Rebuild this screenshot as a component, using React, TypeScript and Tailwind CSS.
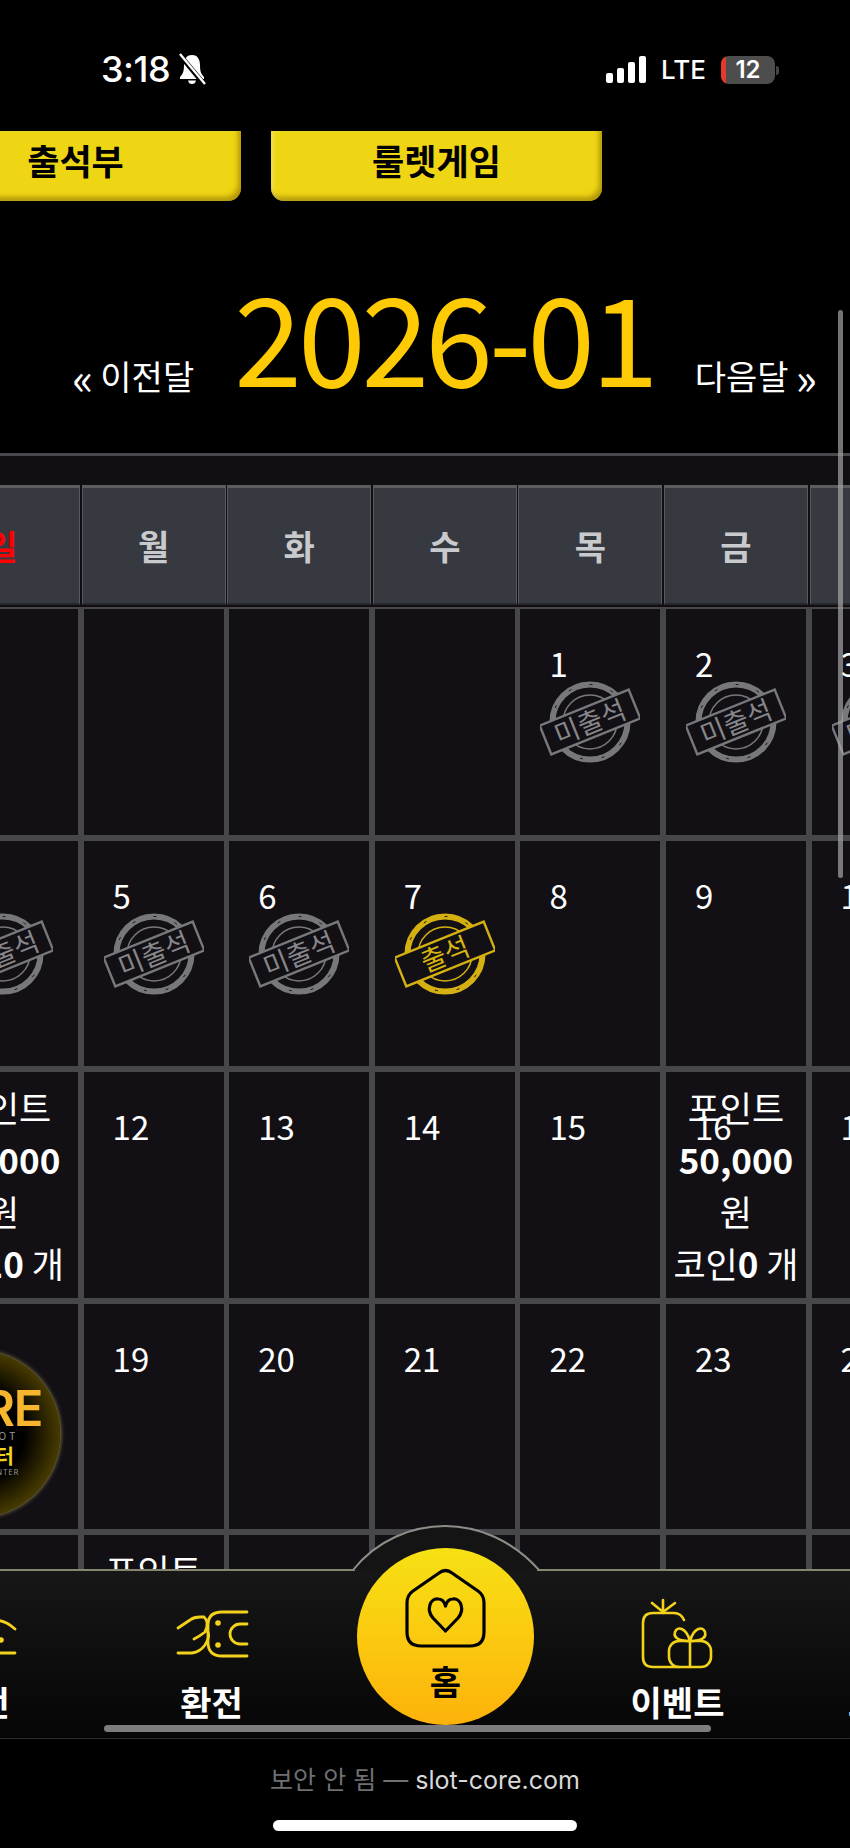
const Stamp = ({ on }: { on?: boolean }) => {
  const c = on ? "#d4b010" : "#78787c";
  return (
    <svg className="absolute left-1/2 top-[63px] -translate-x-1/2" width="100" height="100" viewBox="0 0 100 100">
      <circle cx="50" cy="50" r="37.5" fill="none" stroke={c} strokeWidth="6" />
      <circle cx="50" cy="50" r="37.5" fill="none" stroke="#121015" strokeWidth="1" strokeDasharray="3 19" />
      <circle cx="50" cy="50" r="27" fill="none" stroke={c} strokeWidth="1.5" />
      <g transform="rotate(-22 50 50)">
        <rect x="2" y="34.5" width="96" height="31" fill="#121015" stroke={c} strokeWidth="2.4" />
        <text x="50" y="60" textAnchor="middle" fontSize="27" fontFamily="'Noto Sans CJK KR', sans-serif" fill={on ? "#d8b40f" : "#87878a"}>
          {on ? "출석" : "미출석"}
        </text>
      </g>
    </svg>
  );
};

const Points = ({ coin }: { coin: string }) => (
  <div className="absolute inset-x-0 top-[9px] flex flex-col items-center whitespace-nowrap text-[35px] leading-[52px] text-white">
    <span>포인트</span>
    <b className="font-bold">50,000</b>
    <span>원</span>
    <span className={coin === "10" ? "-translate-x-[12px]" : ""}>
      코인<b className="font-bold">{coin}</b> 개
    </span>
  </div>
);

const Logo = () => (
  <div className="absolute left-[-34px] top-[47px] flex h-[166px] w-[166px] flex-col items-center justify-center whitespace-nowrap rounded-full bg-[radial-gradient(circle,#000_40%,#4a3d00_72%,#c9a912_90%,#fff3a0_98%)] shadow-[0_0_5px_rgba(255,236,112,0.7)]">
    <span className="text-[49px] font-semibold leading-[38px] tracking-tight text-[#f8b62e] [font-family:Inter,sans-serif]">CORE</span>
    <span className="mt-[3px] text-[10px] leading-[10px] tracking-[3px] text-[#9a9a9a] [font-family:Inter,sans-serif]">CORE SLOT</span>
    <span className="mt-[3px] text-[20px] font-bold leading-[24px] text-[#f0d21e]">고객센터</span>
    <span className="text-[7px] leading-[9px] tracking-[1px] text-[#9a9a9a] [font-family:Inter,sans-serif]">CUSTOMER CENTER</span>
  </div>
);

const Cell = ({ n, children }: { n?: number; children?: React.ReactNode }) => (
  <div className="relative bg-[#121015] pl-[29px] pt-[34px] text-[33px] leading-[40px] text-white">
    {n}
    {children}
  </div>
);

const Exchange = () => (
  <svg width="120" height="100" viewBox="2 0 120 100" fill="none" stroke="#f3d21c" strokeWidth="2.8" strokeLinecap="round">
    <path d="M28,46 L40,38 Q44,35 50,35 L54,35 Q60,40 55,50 Q50,54 44,57" />
    <path d="M28,71 L42,71 Q50,70 55,63 Q60,55 58,50" />
    <path d="M97,30 H72 Q58,30 58,43 V60 Q58,74 72,74 H97" />
    <path d="M97,42 H90 A10,10 0 0 0 90,62 H97" />
    <circle cx="68" cy="41" r="2.8" fill="#f3d21c" stroke="none" />
    <circle cx="68" cy="63" r="2.8" fill="#f3d21c" stroke="none" />
  </svg>
);

const Charge = () => (
  <svg width="120" height="100" viewBox="0 0 120 100" fill="none" stroke="#f3d21c" strokeWidth="2.8" strokeLinecap="round">
    <path d="M60,52 Q75,28 96,47" />
    <path d="M60,71 H96" />
    <circle cx="82" cy="58" r="2.8" fill="#f3d21c" stroke="none" />
  </svg>
);

const Gift = () => (
  <svg width="120" height="100" viewBox="-1 1 120 100" fill="none" stroke="#f3d21c" strokeWidth="2.6" strokeLinecap="round" strokeLinejoin="round">
    <path d="M44,19 V32 M33,22 L44,31 L56,22" />
    <path d="M65,39 Q62,32 55,32 H34 Q24,32 24,42 V76 Q24,86 34,86 H60" />
    <rect x="50" y="60" width="42" height="26" rx="10" />
    <path d="M71,60 V86" />
    <path d="M71,60 C62,60 54,58 56,51 C58,45 67,46 71,60 C75,46 84,45 86,51 C88,58 80,60 71,60 Z" />
  </svg>
);

const Tab = ({ label, icon }: { label: string; icon?: React.ReactNode }) => (
  <div className="flex w-[233px] shrink-0 flex-col items-center pt-[11px]">
    <div className="h-[100px]">{icon}</div>
    <span className="whitespace-nowrap text-[34px] font-bold leading-[40px] text-white">{label}</span>
  </div>
);

export default function App() {
  return (
    <div className="relative h-[1848px] w-[850px] overflow-hidden bg-black [font-family:'Noto_Sans_CJK_KR',sans-serif]">
      {/* status bar */}
      <div className="flex h-[131px] items-start justify-between pl-[101px] pr-[71px] pt-[49px] text-white">
        <div className="flex items-center gap-[7px]">
          <span className="text-[36px] font-medium leading-[40px] tracking-[-0.5px] [font-family:Inter,sans-serif]">3:18</span>
          <svg width="30" height="32" viewBox="0 0 30 32">
            <path d="M15,2 C9,2 7,7 7,12 C7,18 6,21 3,24 V26 H27 V24 C24,21 23,18 23,12 C23,7 21,2 15,2 Z M11,27.5 H19 C18.5,30 17,31 15,31 C13,31 11.5,30 11,27.5 Z" fill="#fff" />
            <path d="M2,1 L27,31" stroke="#000" strokeWidth="5" />
            <path d="M3,1 L28,31" stroke="#fff" strokeWidth="2.4" />
          </svg>
        </div>
        <div className="mt-[5px] flex items-center">
          <svg width="42" height="28" viewBox="0 0 42 28" fill="#fff">
            <rect x="0" y="17" width="7" height="10" rx="2" />
            <rect x="11" y="12" width="7" height="15" rx="2" />
            <rect x="22" y="6" width="7" height="21" rx="2" />
            <rect x="33" y="0" width="7" height="27" rx="2" />
          </svg>
          <span className="ml-[13px] text-[26px] font-medium leading-[32px] [font-family:Inter,sans-serif]">LTE</span>
          <div className="relative ml-[15px] flex h-[28px] w-[54px] items-center justify-center overflow-hidden rounded-[8px] bg-[#4d4d4d] text-[24px] font-semibold leading-[28px] [font-family:Inter,sans-serif]">
            <div className="absolute inset-y-0 left-0 w-[5px] bg-[#e5392b]" />
            12
          </div>
          <div className="ml-[1px] h-[9px] w-[3px] rounded-r-full bg-[#444]" />
        </div>
      </div>

      {/* buttons */}
      <div className="-ml-[90px] flex gap-[30px]">
        {["출석부", "룰렛게임"].map((t) => (
          <div
            key={t}
            className="flex h-[70px] w-[331px] items-center justify-center rounded-b-[13px] bg-[#efd614] pb-[12px] text-[35px] font-bold text-black shadow-[inset_-3px_-4px_5px_rgba(130,100,0,0.55),inset_3px_0_3px_rgba(255,255,210,0.3)]"
          >
            {t}
          </div>
        ))}
      </div>

      {/* month title */}
      <div className="flex h-[252px] items-end justify-center gap-[40px] pb-[58px] pl-[39px] text-[34px] leading-[46px] text-white">
        <span className="mb-[-4px] flex items-center gap-[7px] whitespace-nowrap">
          <span className="text-[44px] leading-[46px]">«</span>이전달
        </span>
        <span className="text-[122px] leading-[122px] tracking-[-4px] text-[#fdca03]">2026-01</span>
        <span className="mb-[-4px] flex items-center gap-[7px] whitespace-nowrap">
          다음달<span className="text-[44px] leading-[46px]">»</span>
        </span>
      </div>

      {/* calendar */}
      <div className="border-t-[3px] border-[#49484c] bg-[#110e11] pt-[29px]">
        <div className="-ml-[76px] grid w-max grid-cols-[156px_repeat(6,144px)] gap-x-[1.6px]">
          {["일", "월", "화", "수", "목", "금", "토"].map((d) => (
            <div
              key={d}
              className={`flex h-[120px] items-center justify-center border-x border-b-2 border-t-[3px] border-x-[#59595e] border-b-[#26272b] border-t-[#5b5b60] bg-[#363940] text-[34px] font-bold ${d === "일" ? "text-[#ff0000]" : "text-[#c9cacd]"}`}
            >
              {d}
            </div>
          ))}
        </div>
        <div className="-ml-[72px] mt-[2px] grid w-max auto-rows-[225.5px] grid-cols-[150px_repeat(6,140px)] gap-x-[5.6px] gap-y-[6px] bg-[#47464b] pt-[2px]">
          <Cell />
          <Cell />
          <Cell />
          <Cell />
          <Cell n={1}><Stamp /></Cell>
          <Cell n={2}><Stamp /></Cell>
          <Cell n={3}><Stamp /></Cell>

          <Cell><Stamp /></Cell>
          <Cell n={5}><Stamp /></Cell>
          <Cell n={6}><Stamp /></Cell>
          <Cell n={7}><Stamp on /></Cell>
          <Cell n={8} />
          <Cell n={9} />
          <Cell n={10} />

          <Cell><Points coin="10" /></Cell>
          <Cell n={12} />
          <Cell n={13} />
          <Cell n={14} />
          <Cell n={15} />
          <Cell n={16}><Points coin="0" /></Cell>
          <Cell n={17} />

          <Cell><Logo /></Cell>
          <Cell n={19} />
          <Cell n={20} />
          <Cell n={21} />
          <Cell n={22} />
          <Cell n={23} />
          <Cell n={24} />

          <Cell />
          <Cell n={26}><Points coin="0" /></Cell>
          <Cell n={27} />
          <Cell n={28} />
          <Cell n={29} />
          <Cell n={30} />
          <Cell n={31} />
        </div>
      </div>

      {/* page scrollbar */}
      <div className="absolute left-[838px] top-[310px] h-[568px] w-[5px] rounded-full bg-[#a5a5a5]/70" />

      {/* bottom nav + browser bar */}
      <div className="absolute inset-x-0 bottom-0">
        <div className="relative h-[170px] border-b border-t-2 border-b-[#2e2e2e] border-t-[#86856f] bg-gradient-to-b from-[#171717] to-[#060606]">
          <svg className="absolute left-[352px] top-[-46px]" width="188" height="50" viewBox="0 0 188 50">
            <path d="M1,45 C25,15 60,1 93,1 C126,1 160,15 187,45" fill="#141414" stroke="#8d8d88" strokeWidth="2" />
            <path d="M3,44 H185 V48 H3 Z" fill="#161616" />
          </svg>
          <div className="-ml-[138px] flex">
            <Tab label="충전" icon={<Charge />} />
            <Tab label="환전" icon={<Exchange />} />
            <div className="w-[233px] shrink-0" />
            <Tab label="이벤트" icon={<Gift />} />
            <Tab label="고객센터" />
          </div>
          <div className="absolute left-[357px] top-[-23px] flex h-[177px] w-[177px] flex-col items-center rounded-full bg-gradient-to-b from-[#f6e114] to-[#fdb20a] pt-[20px]">
            <svg width="81" height="80" viewBox="0 0 81 80" fill="none" stroke="#000" strokeWidth="3.2" strokeLinejoin="round">
              <path d="M34,5 L8,23 Q2,27 2,35 V64 Q2,78 16,78 H65 Q79,78 79,64 V35 Q79,27 73,23 L47,5 Q40.5,0 34,5 Z" />
              <path d="M40.5,63 L28,50 C21,42 25,30 33,31 C37,31 39.5,34 40.5,38 C41.5,34 44,31 48,31 C56,30 60,42 53,50 Z" />
            </svg>
            <span className="mt-[13px] text-[34px] font-bold leading-[40px] text-black">홈</span>
          </div>
          <div className="absolute left-[104px] top-[154px] h-[7px] w-[607px] rounded-full bg-[#7d7d80]" />
        </div>
        <div className="h-[109px] bg-black pt-[27px]">
          <div className="text-center text-[25px] leading-[28px] text-[#6f6f72] [font-family:Inter,'Noto_Sans_CJK_KR',sans-serif]">
            보안 안 됨 — <span className="text-[#d8d8d8]">slot-core.com</span>
          </div>
          <div className="mx-auto mt-[26px] h-[11px] w-[304px] rounded-full bg-white" />
        </div>
      </div>
    </div>
  );
}
